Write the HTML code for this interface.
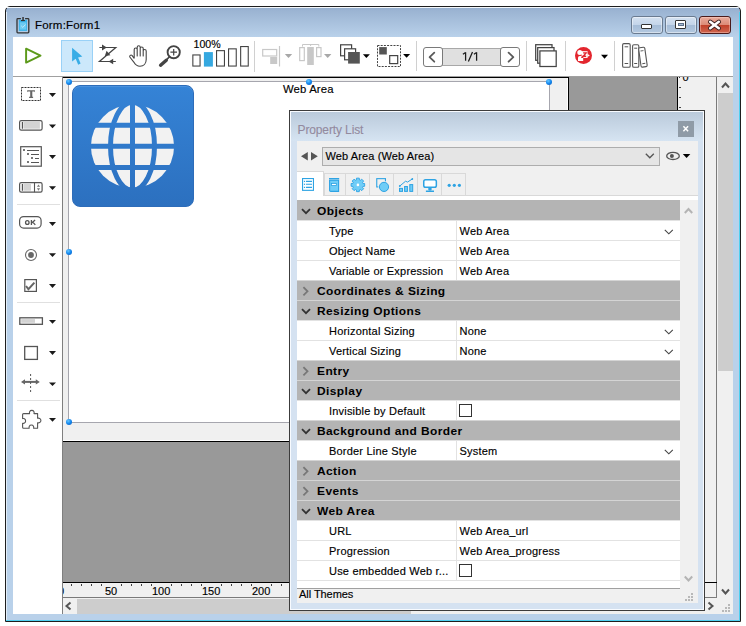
<!DOCTYPE html>
<html><head><meta charset="utf-8">
<style>
*{margin:0;padding:0;box-sizing:border-box}
html,body{width:746px;height:626px;overflow:hidden;background:#fff;font-family:"Liberation Sans",sans-serif;color:#000}
.a{position:absolute}
.t{position:absolute;white-space:nowrap;line-height:1;-webkit-text-stroke:0.15px currentColor}
.h{font-size:11.5px;letter-spacing:0.4px;font-weight:bold;transform:scaleX(1.04);transform-origin:0 0;-webkit-text-stroke:0}
svg{position:absolute;overflow:visible}
</style></head><body>
<!-- window frame -->
<div class="a" style="left:5px;top:6px;width:736px;height:616px;border:1px solid #1e1e1e;border-radius:5px 5px 0 0;background:linear-gradient(#98b1d0 1px,#b9d1ea 30px);"></div>
<div class="a" style="left:6px;top:7px;width:733px;height:1px;background:#f4f8fc;border-radius:5px 5px 0 0"></div>
<div class="a" style="left:739px;top:12px;width:1px;height:609px;background:#4fd0f0"></div>
<div class="a" style="left:6px;top:12px;width:1px;height:608px;background:#e3edf7"></div>
<div class="a" style="left:6px;top:620px;width:734px;height:1px;background:#4fd0f0"></div>

<!-- title -->
<svg style="left:14px;top:14px" width="18" height="22" viewBox="0 0 18 22">
 <rect x="4.9" y="5.8" width="8.1" height="11.1" fill="#3ab3e9"/>
 <rect x="5.8" y="8.3" width="6.4" height="7.3" fill="#6ccbf3"/>
 <path d="M6.9 4.6H3.8Q3 4.6 3 5.4V18Q3 18.8 3.8 18.8H14Q14.8 18.8 14.8 18V5.4Q14.8 4.6 14 4.6H11.1" fill="none" stroke="#333" stroke-width="1.3"/>
 <rect x="8.3" y="3" width="1.5" height="3.4" fill="#333"/>
 <rect x="7" y="6" width="3.9" height="1.1" fill="#333"/>
 <path d="M7.2 11.8L8.8 13.4L11.5 10.5" fill="none" stroke="#c8eefc" stroke-width="0.9"/>
</svg>
<div class="t" style="left:35px;top:20.3px;font-size:11.5px;letter-spacing:0.2px;color:#000">Form:Form1</div>

<!-- caption buttons -->
<div class="a" style="left:631px;top:16px;width:32px;height:18px;border:1px solid #6a7b90;border-radius:3px;background:linear-gradient(#d5e2f1 0,#c3d4e9 50%,#a5bcd7 50%,#b3c8e0 100%);box-shadow:inset 0 0 0 1px rgba(255,255,255,0.45)"></div>
<div class="a" style="left:641px;top:24px;width:11px;height:5px;border:1px solid #333;border-radius:1px;background:#fff"></div>
<div class="a" style="left:665px;top:16px;width:32px;height:18px;border:1px solid #6a7b90;border-radius:3px;background:linear-gradient(#d5e2f1 0,#c3d4e9 50%,#a5bcd7 50%,#b3c8e0 100%);box-shadow:inset 0 0 0 1px rgba(255,255,255,0.45)"></div>
<div class="a" style="left:675px;top:20px;width:11px;height:9px;border:1px solid #333;border-radius:1px;background:#fff"></div>
<div class="a" style="left:678px;top:22.5px;width:5.5px;height:3.5px;border:1px solid #5d708a;background:#a9bdd6"></div>
<div class="a" style="left:699px;top:16px;width:32px;height:18px;border:1px solid #4a1a1a;border-radius:3px;background:linear-gradient(#e9ab9c 0,#dc8a76 50%,#c03f28 50%,#d06650 100%);box-shadow:inset 0 0 0 1px rgba(255,220,210,0.4)"></div>
<svg style="left:708px;top:20px" width="13" height="10" viewBox="0 0 13 10">
 <path d="M2.2 1.8L10.8 8.2M10.8 1.8L2.2 8.2" stroke="#3a2020" stroke-width="4.4" stroke-linecap="round"/>
 <path d="M2.2 1.8L10.8 8.2M10.8 1.8L2.2 8.2" stroke="#fff" stroke-width="2.6" stroke-linecap="round"/>
</svg>

<!-- client area -->
<div class="a" style="left:13px;top:37px;width:720px;height:39px;background:#fff"></div>
<div class="a" style="left:13px;top:76px;width:720px;height:1px;background:#a0a0a0"></div>
<div class="a" style="left:13px;top:77px;width:49px;height:537px;background:#fff"></div>
<div class="a" style="left:62px;top:77px;width:1px;height:537px;background:#7f7f7f"></div>

<!-- canvas -->
<div class="a" style="left:63px;top:77px;width:614px;height:505px;background:#999"></div>
<!-- form frame -->
<div class="a" style="left:63px;top:77px;width:506px;height:365px;background:#f0f0f0;border-top:1px solid #000;border-right:1px solid #000;border-bottom:1px solid #000"></div>
<div class="a" style="left:63px;top:440px;width:505px;height:1px;background:#fff"></div>
<div class="a" style="left:567px;top:78px;width:1px;height:363px;background:#fff"></div>
<div class="a" style="left:68px;top:81px;width:482px;height:342px;background:#fff;border:1px solid #a6a6ae"></div>

<!-- toolbar -->
<svg style="left:22px;top:45px" width="22" height="22" viewBox="22 45 22 22">
 <path d="M26.1 48.7L40.5 55.6L26.1 62.6Z" fill="none" stroke="#5d9a1b" stroke-width="1.95" stroke-linejoin="round"/>
</svg>
<div class="a" style="left:61px;top:40px;width:32px;height:32px;background:#cce8fb;border:1px solid #99d1f7"></div>
<svg style="left:70px;top:46px" width="14" height="20" viewBox="70 46 14 20">
 <path d="M72.1 47.8L82.3 56.6L78.1 57.4L80.6 63.4L78.2 64.7L75.7 58.8L72.1 61.6Z" fill="#38ade6"/>
</svg>
<svg style="left:95px;top:38px" width="24" height="30" viewBox="0 0 24 30">
 <path d="M4.4 9.5H20.8L4.4 23.5H20.8" fill="none" stroke="#444" stroke-width="1.2" stroke-linejoin="miter"/>
 <path d="M11.8 9.5L7 6.6V12.4Z" fill="#444"/>
 <path d="M9.8 18.1L15.4 17.2L11.6 12.8Z" fill="#444"/>
 <path d="M13.6 23.5L18.2 20.7V26.3Z" fill="#444"/>
</svg>
<svg style="left:129px;top:45px" width="19" height="22" viewBox="0 0 19 22">
 <path d="M5.2 13.5V4.5a1.5 1.5 0 0 1 3 0V11V2.2a1.5 1.5 0 0 1 3 0V11V3.5a1.5 1.5 0 0 1 3 0V11V6a1.5 1.5 0 0 1 3 0V14.5c0 4-2.5 6.8-6.2 6.8c-3 0-4.8-1.6-6.2-4.2L0.8 12a1.4 1.4 0 0 1 2.2-1.6L5.2 13.5" fill="#fff" stroke="#444" stroke-width="1.1" stroke-linejoin="round"/>
</svg>
<svg style="left:158px;top:44px" width="24" height="24" viewBox="0 0 24 24">
 <circle cx="15.7" cy="8.2" r="6.1" fill="#fff" stroke="#444" stroke-width="1.9"/>
 <path d="M15.7 4.9v6.6M12.4 8.2h6.6" stroke="#444" stroke-width="1.2"/>
 <path d="M11.6 12.6L8.5 15.8" stroke="#444" stroke-width="1.6"/>
 <path d="M8.3 16.2L2.6 21.2" stroke="#444" stroke-width="3.4" stroke-linecap="round"/>
</svg>
<div class="t" style="left:193.5px;top:38.8px;font-size:10.6px;color:#000">100%</div>
<svg style="left:190px;top:44px" width="62" height="25" viewBox="190 44 62 25">
 <rect x="192.85" y="54.95" width="7.2" height="11.1" fill="#fff" stroke="#444" stroke-width="1.1"/>
 <rect x="203.9" y="52.1" width="9" height="14.5" fill="#35a8e0"/>
 <rect x="216.55" y="50.65" width="7.9" height="15.4" fill="#fff" stroke="#444" stroke-width="1.1"/>
 <rect x="228.55" y="48.85" width="7.7" height="17.2" fill="#fff" stroke="#444" stroke-width="1.1"/>
 <rect x="240.65" y="46.55" width="7.6" height="19.5" fill="#fff" stroke="#444" stroke-width="1.1"/>
</svg>
<div class="a" style="left:254px;top:41px;width:1px;height:31px;background:#d0d0d0"></div>
<svg style="left:260px;top:44px" width="75" height="24" viewBox="0 0 75 24">
 <rect x="2.7" y="5.5" width="14" height="6.5" fill="none" stroke="#c8c8c8" stroke-width="1.2"/>
 <rect x="10.2" y="13" width="7" height="7" fill="#c8c8c8"/>
 <path d="M19.5 2v20.5" stroke="#c8c8c8" stroke-width="1.2"/>
 <path d="M24.8 10h7.4l-3.7 4z" fill="#a8a8a8"/>
 <path d="M42.5 2.6V0.5H58.8V2.6M50.6 0.5V2" fill="none" stroke="#c8c8c8" stroke-width="1"/>
 <rect x="39.7" y="3.6" width="4.6" height="13" fill="none" stroke="#c8c8c8" stroke-width="1.2"/>
 <rect x="47.2" y="3" width="6.6" height="18" fill="#c8c8c8"/>
 <rect x="56.6" y="3.6" width="4.4" height="9" fill="none" stroke="#c8c8c8" stroke-width="1.2"/>
 <path d="M64 10h7.4l-3.7 4z" fill="#a8a8a8"/>
</svg>
<svg style="left:338px;top:43px" width="75" height="25" viewBox="0 0 75 25">
 <rect x="2.6" y="1.8" width="11" height="11" fill="#fff" stroke="#444" stroke-width="1.2"/>
 <rect x="6.6" y="5.8" width="11" height="11" fill="#fff" stroke="#444" stroke-width="1.2"/>
 <rect x="10.1" y="9" width="11.7" height="11.6" fill="#555"/>
 <path d="M24.9 11.2h7l-3.5 3.8z" fill="#000"/>
 <rect x="39.5" y="2.5" width="23" height="21" fill="none" stroke="#444" stroke-width="1" stroke-dasharray="2 1.2"/>
 <rect x="41.2" y="4.1" width="7.6" height="7.4" fill="#555"/>
 <rect x="51.7" y="12.6" width="8" height="8" fill="#fff" stroke="#444" stroke-width="1.2"/>
 <path d="M65.1 11h7l-3.5 3.8z" fill="#000"/>
</svg>
<div class="a" style="left:416px;top:41px;width:1px;height:30px;background:#d0d0d0"></div>
<div class="a" style="left:442px;top:48px;width:59px;height:18px;background:#e0e0e0;border:1px solid #a8a8a8"></div>
<div class="a" style="left:423px;top:47px;width:20px;height:20px;background:#fff;border:1px solid #7a7a7a;border-radius:3px"></div>
<div class="a" style="left:500px;top:47px;width:20px;height:20px;background:#fff;border:1px solid #7a7a7a;border-radius:3px"></div>
<svg style="left:423px;top:47px" width="97" height="20" viewBox="0 0 97 20">
 <path d="M11.3 5.7L6.6 10.2L11.3 14.7" fill="none" stroke="#5a5a5a" stroke-width="1.8" stroke-linecap="round" stroke-linejoin="round"/>
 <path d="M85.6 5.7L90.3 10.2L85.6 14.7" fill="none" stroke="#5a5a5a" stroke-width="1.8" stroke-linecap="round" stroke-linejoin="round"/>
</svg>
<svg style="left:460px;top:50px" width="20" height="13" viewBox="460 50 20 13"><path d="M465.6 52.2V60.8M465.6 52.4L462.9 54.2M476.6 52.2V60.8M476.6 52.4L473.9 54.2M468.4 61.6L472.5 52" fill="none" stroke="#1a1a1a" stroke-width="1.25"/></svg>
<div class="a" style="left:526px;top:41px;width:1px;height:30px;background:#d0d0d0"></div>
<svg style="left:534px;top:43px" width="24" height="25" viewBox="0 0 24 25">
 <rect x="1.7" y="1.7" width="16.3" height="15.6" fill="#fff" stroke="#444" stroke-width="1.25"/>
 <rect x="3.7" y="4.6" width="16.3" height="15.6" fill="#fff" stroke="#444" stroke-width="1.25"/>
 <rect x="5.9" y="7.9" width="16.3" height="15.6" fill="#fff" stroke="#444" stroke-width="1.25"/>
</svg>
<div class="a" style="left:565px;top:41px;width:1px;height:30px;background:#d0d0d0"></div>
<svg style="left:574px;top:46px" width="19" height="19" viewBox="0 0 19 19">
 <circle cx="9.5" cy="9.4" r="8.5" fill="#e3262e"/>
 <circle cx="5.8" cy="6.6" r="2.5" fill="#fff"/>
 <path d="M4 15V11.8Q4 10 5.8 10H7.4Q9.2 10 9.2 11.8V15Z" fill="#fff"/>
 <rect x="7.6" y="5.2" width="6" height="6.7" fill="#fff"/>
 <path d="M9.1 6.9H12.1L9.2 10.2H12.2" fill="none" stroke="#e3262e" stroke-width="1.4"/>
 <path d="M13.4 7.8L15.8 9.4L13.4 11Z" fill="#fff"/>
 <path d="M8.2 9.2L9.6 11.9H7z" fill="#e3262e"/>
</svg>
<svg style="left:601px;top:54px" width="8" height="6" viewBox="0 0 8 6"><path d="M0 0.8h7l-3.5 4z" fill="#000"/></svg>
<div class="a" style="left:614px;top:41px;width:1px;height:30px;background:#d0d0d0"></div>
<svg style="left:621px;top:42px" width="29" height="27" viewBox="0 0 29 27">
 <rect x="1.6" y="1.6" width="7.6" height="23.6" rx="1.3" fill="#fff" stroke="#555" stroke-width="1.1"/>
 <path d="M3.6 4.8h3.6M3.6 21.5h3.6" stroke="#555" stroke-width="1"/>
 <rect x="11.6" y="2.8" width="6.2" height="22.4" rx="1.3" fill="#fff" stroke="#555" stroke-width="1.1"/>
 <path d="M13.2 6.2h3M13.2 21.5h3" stroke="#555" stroke-width="1"/>
 <g transform="rotate(-8 21 25.2)"><rect x="20.2" y="5.6" width="6.2" height="19.6" rx="1.3" fill="#fff" stroke="#555" stroke-width="1.1"/>
 <path d="M21.8 9h3M21.8 21.8h3" stroke="#555" stroke-width="1"/></g>
</svg>

<!-- left palette -->
<svg style="left:0;top:0" width="62" height="440" viewBox="0 0 62 440">
 <g fill="#1a1a1a">
  <path d="M49 93h7l-3.5 3.9z"/>
  <path d="M49 124.4h7l-3.5 3.9z"/>
  <path d="M49 155.1h7l-3.5 3.9z"/>
  <path d="M49 186.3h7l-3.5 3.6z"/>
  <path d="M49 222h7l-3.5 3.9z"/>
  <path d="M49 253.2h7l-3.5 3.9z"/>
  <path d="M49 284.1h7l-3.5 3.8z"/>
  <path d="M49 320.1h7l-3.5 3.6z"/>
  <path d="M49 351.1h7l-3.5 3.8z"/>
  <path d="M49 382.5h7l-3.5 3.6z"/>
  <path d="M49 418h7l-3.5 3.8z"/>
 </g>
 <rect x="21.5" y="87.5" width="19" height="13" fill="none" stroke="#333" stroke-width="1" stroke-dasharray="2 1"/>
 <path d="M27.2 90.2H34.9V92.2L34.2 91.4H32.3V96.8H33.1V97.9H29.1V96.8H30.2V91.4H27.9L27.2 92.2Z" fill="#666"/>
 <rect x="19.6" y="120.6" width="22.5" height="9.6" rx="1.6" fill="#fff" stroke="#555" stroke-width="1.2"/>
 <rect x="23.4" y="122" width="16.5" height="6.7" fill="#d3d3d3"/>
 <path d="M22.4 122v6.7" stroke="#555" stroke-width="1.2"/>
 <rect x="20.7" y="146.7" width="20.6" height="19.5" fill="#fff" stroke="#555" stroke-width="1.2"/>
 <g fill="#777"><rect x="23" y="149" width="2" height="2"/><rect x="27" y="153" width="2" height="2"/><rect x="31" y="157" width="2" height="2"/><rect x="27" y="161" width="2" height="2"/></g>
 <path d="M27 150.5h12M31 154.5h8M35 158.5h4M31 162.5h8" stroke="#555" stroke-width="1"/>
 <rect x="19.6" y="182.6" width="22.5" height="9.6" rx="1.6" fill="#fff" stroke="#555" stroke-width="1.2"/>
 <path d="M34.5 182.6v9.6" stroke="#555" stroke-width="1.1"/>
 <rect x="23.4" y="184" width="7.6" height="6.7" fill="#d3d3d3"/>
 <path d="M22.4 184v6.7" stroke="#555" stroke-width="1.2"/>
 <path d="M36.9 186.7l1.6-2.3 1.6 2.3zM36.9 188.3l1.6 2.4 1.6-2.4z" fill="#777"/>
 <rect x="19.6" y="216.6" width="21.5" height="11.5" rx="4" fill="#fff" stroke="#555" stroke-width="1.2"/>
 <ellipse cx="27.3" cy="222.5" rx="1.75" ry="1.95" fill="none" stroke="#555" stroke-width="1.3"/>
 <path d="M31.4 220.1v4.8M35.1 220.1L31.7 223M32.8 222.1L35.3 224.9" fill="none" stroke="#555" stroke-width="1.3"/>
 <circle cx="31" cy="255" r="5.5" fill="#fff" stroke="#666" stroke-width="1.1"/>
 <circle cx="31" cy="255" r="2.9" fill="#666"/>
 <rect x="24.8" y="279.6" width="11.6" height="11.8" fill="#fff" stroke="#555" stroke-width="1.2"/>
 <path d="M26 286l2.4 3.2 6-6.6" fill="none" stroke="#666" stroke-width="2"/>
 <rect x="19.8" y="317.8" width="22.6" height="6.5" fill="#fff" stroke="#555" stroke-width="1.3"/>
 <rect x="21.2" y="319.1" width="13.8" height="3.7" fill="#d3d3d3"/>
 <rect x="24.7" y="346.5" width="12.7" height="12.9" fill="#fff" stroke="#555" stroke-width="1.3"/>
 <path d="M24 381.9h13" stroke="#666" stroke-width="2"/>
 <path d="M21 381.9l4-2.6v5.2zM39.8 381.9l-4-2.6v5.2z" fill="#666"/>
 <path d="M30.6 374v20" stroke="#555" stroke-width="1" stroke-dasharray="2 2"/>
 <path d="M23.6 413.6H29.6C29.2 412.5 29.6 410.4 31.8 410.4C34 410.4 34.4 412.5 34 413.6H37.6V418.3C38.7 417.9 40.9 418.3 40.9 420.5C40.9 422.7 38.7 423.1 37.6 422.7V428.2H33.6C34 427 33.6 425 31.4 425C29.2 425 28.8 427 29.2 428.2H23.6Q22.6 428.2 22.6 427.2V423.2C23.6 423.6 25.6 423.2 25.6 420.9C25.6 418.6 23.6 418.2 22.6 418.6V414.6Q22.6 413.6 23.6 413.6Z" fill="#fff" stroke="#555" stroke-width="1.1" stroke-linejoin="round"/>
</svg>
<div class="a" style="left:17px;top:204px;width:43px;height:1px;background:#e0e0e0"></div>
<div class="a" style="left:17px;top:302px;width:43px;height:1px;background:#e0e0e0"></div>
<div class="a" style="left:17px;top:400px;width:43px;height:1px;background:#e0e0e0"></div>

<!-- form content -->
<div class="a" style="left:72px;top:85px;width:122px;height:122px;border-radius:8px;background:linear-gradient(#3583d6,#2c70bf);border:1px solid #2d6cb9;box-shadow:inset 0 1px 0 #4b92de"></div>
<svg style="left:72px;top:85px" width="122" height="122" viewBox="0 0 122 122">
 <defs><clipPath id="gc"><circle cx="60.5" cy="61.3" r="43"/></clipPath><linearGradient id="bg" gradientUnits="userSpaceOnUse" x1="0" y1="0" x2="0" y2="122"><stop offset="0" stop-color="#3583d6"/><stop offset="1" stop-color="#2c70bf"/></linearGradient></defs>
 <circle cx="60.5" cy="61.3" r="41.6" fill="#f2f2f2"/>
 <g clip-path="url(#gc)">
  <g stroke="url(#bg)" stroke-width="5" fill="none">
   <path d="M0 40.2H122M0 61.3H122M0 82.4H122M60.5 0V122"/>
   <ellipse cx="60.5" cy="61.3" rx="22" ry="44"/>
  </g>
 </g>
</svg>
<div class="t" style="left:283px;top:84.2px;font-size:11.3px;letter-spacing:0.15px;color:#000">Web Area</div>
<div class="a" style="left:66px;top:79px;width:6px;height:6px;border-radius:50%;background:radial-gradient(circle at 38% 32%,#66c8ff,#1286ee 50%,#0a5ab8 100%)"></div>
<div class="a" style="left:306px;top:79px;width:6px;height:6px;border-radius:50%;background:radial-gradient(circle at 38% 32%,#66c8ff,#1286ee 50%,#0a5ab8 100%)"></div>
<div class="a" style="left:546px;top:79px;width:6px;height:6px;border-radius:50%;background:radial-gradient(circle at 38% 32%,#66c8ff,#1286ee 50%,#0a5ab8 100%)"></div>
<div class="a" style="left:66px;top:249px;width:6px;height:6px;border-radius:50%;background:radial-gradient(circle at 38% 32%,#66c8ff,#1286ee 50%,#0a5ab8 100%)"></div>
<div class="a" style="left:66px;top:419px;width:6px;height:6px;border-radius:50%;background:radial-gradient(circle at 38% 32%,#66c8ff,#1286ee 50%,#0a5ab8 100%)"></div>

<!-- vertical ruler -->
<div class="a" style="left:677px;top:77px;width:1px;height:505px;background:#000"></div>
<div class="a" style="left:678px;top:77px;width:38px;height:505px;background:#f0f0f0"></div>
<div class="a" style="left:716px;top:77px;width:1px;height:521px;background:#7a7a7a"></div>
<div class="a" style="left:679px;top:87px;width:2px;height:1px;background:#444"></div>
<div class="a" style="left:679px;top:97px;width:2px;height:1px;background:#444"></div>
<div class="a" style="left:679px;top:107px;width:2px;height:1px;background:#444"></div>
<div class="a" style="left:679px;top:77px;width:1px;height:1px;background:#333"></div>
<div class="a" style="left:678px;top:77px;width:38px;height:5px;overflow:hidden"><div class="t" style="left:4.5px;top:-5.3px;font-size:11px">0</div></div>
<!-- horizontal ruler -->
<div class="a" style="left:63px;top:582px;width:654px;height:1px;background:#000"></div>
<div class="a" style="left:63px;top:583px;width:653px;height:14px;background:#f0f0f0;overflow:hidden">
 <div class="t" style="left:-5px;top:3px;font-size:11px">0</div>
 <div class="t" style="left:42px;top:3px;font-size:11px">50</div>
 <div class="t" style="left:89px;top:3px;font-size:11px">100</div>
 <div class="t" style="left:139px;top:3px;font-size:11px">150</div>
 <div class="t" style="left:189px;top:3px;font-size:11px">200</div>
</div>
<div class="a" style="left:63px;top:597px;width:654px;height:1px;background:#7a7a7a"></div>
<svg style="left:63px;top:583px" width="230" height="4" viewBox="0 0 230 4">
 <path d="M8.5 1v2M18.5 1v2M28.5 1v2M38.5 1v2M58.5 1v2M68.5 1v2M78.5 1v2M88.5 1v2M108.5 1v2M118.5 1v2M128.5 1v2M138.5 1v2M158.5 1v2M168.5 1v2M178.5 1v2M188.5 1v2M208.5 1v2M218.5 1v2" stroke="#444" stroke-width="1"/>
</svg>
<!-- corner box -->
<div class="a" style="left:704px;top:583px;width:13px;height:15px;border-right:1px solid #7a7a7a;border-bottom:1px solid #7a7a7a;border-radius:0 0 2px 0;background:#f0f0f0"></div>
<!-- h scrollbar -->
<div class="a" style="left:63px;top:598px;width:654px;height:16px;background:#f0f0f0"></div>
<div class="a" style="left:77px;top:599px;width:334px;height:15px;background:#cdcdcd"></div>
<svg style="left:63px;top:598px" width="654" height="16" viewBox="0 0 654 16">
 <path d="M7.5 4.5L3.5 8L7.5 11.5" fill="none" stroke="#555" stroke-width="2"/>
 <path d="M645.5 4.5L649.5 8L645.5 11.5" fill="none" stroke="#555" stroke-width="2"/>
</svg>
<!-- v scrollbar -->
<div class="a" style="left:717px;top:77px;width:16px;height:537px;background:#f0f0f0"></div>
<div class="a" style="left:718px;top:93px;width:15px;height:278px;background:#cdcdcd"></div>
<svg style="left:717px;top:77px" width="16" height="537" viewBox="0 0 16 537">
 <path d="M5 10.5L8.5 6.5L12 10.5" fill="none" stroke="#555" stroke-width="2"/>
 <path d="M5 512.5L8.5 516.5L12 512.5" fill="none" stroke="#555" stroke-width="2"/>
 <g fill="#b8b8b8"><rect x="11" y="527" width="2" height="2"/><rect x="8" y="530" width="2" height="2"/><rect x="11" y="530" width="2" height="2"/><rect x="5" y="533" width="2" height="2"/><rect x="8" y="533" width="2" height="2"/><rect x="11" y="533" width="2" height="2"/></g>
</svg>

<!-- property window -->
<div class="a" style="left:289px;top:110px;width:416px;height:501px;border:1px solid #3c3c3c;background:#d5e2f1"></div>
<div class="a" style="left:290px;top:111px;width:414px;height:499px;border:1px solid #f8fbff;border-right-color:#f8fbff"></div>
<div class="a" style="left:291px;top:112px;width:412px;height:29px;background:linear-gradient(#bacadb,#d6e4f2)"></div>
<div class="t" style="left:297.5px;top:123.5px;font-size:12px;letter-spacing:-0.12px;color:#938a9e;-webkit-text-stroke:0.1px #938a9e">Property List</div>
<div class="a" style="left:678px;top:121px;width:16px;height:16px;background:#8f9ba7"></div>
<svg style="left:678px;top:121px" width="16" height="16" viewBox="0 0 16 16"><path d="M5.4 5.3L10.1 10.3M10.1 5.3L5.4 10.3" stroke="#fff" stroke-width="1.5"/></svg>
<div class="a" style="left:297px;top:141px;width:401px;height:462px;background:#f0f0f0"></div>
<svg style="left:300px;top:151px" width="20" height="11" viewBox="0 0 20 11"><path d="M1 5.3L7.8 1V9.6z M11 1V9.6L17.8 5.3z" fill="#555"/></svg>
<div class="a" style="left:322px;top:147px;width:338px;height:19px;background:#e5e5e5;border:1px solid #adadad"></div>
<div class="t" style="left:325.5px;top:150.9px;font-size:11px;letter-spacing:0.12px">Web Area (Web Area)</div>
<svg style="left:645px;top:153px" width="10" height="6" viewBox="0 0 10 6"><path d="M0.8 0.8L4.8 4.8L8.8 0.8" fill="none" stroke="#555" stroke-width="1.3"/></svg>
<svg style="left:665px;top:150px" width="27" height="12" viewBox="0 0 27 12">
 <ellipse cx="8" cy="5.9" rx="6.3" ry="3.6" fill="none" stroke="#555" stroke-width="1.3"/>
 <circle cx="6.9" cy="6.1" r="2" fill="#555"/>
 <path d="M17.8 4h7.5l-3.75 4z" fill="#000"/>
</svg>
<!-- tabs -->
<div class="a" style="left:297px;top:195px;width:401px;height:5px;background:#fff;border-top:1px solid #d9d9d9"></div>
<div class="a" style="left:324px;top:173px;width:142px;height:23px;background:#f0f0f0;border:1px solid #d9d9d9"></div>
<div class="a" style="left:345px;top:173px;width:1px;height:22px;background:#d9d9d9"></div>
<div class="a" style="left:369px;top:173px;width:1px;height:22px;background:#d9d9d9"></div>
<div class="a" style="left:393px;top:173px;width:1px;height:22px;background:#d9d9d9"></div>
<div class="a" style="left:417px;top:173px;width:1px;height:22px;background:#d9d9d9"></div>
<div class="a" style="left:441px;top:173px;width:1px;height:22px;background:#d9d9d9"></div>
<div class="a" style="left:297px;top:171px;width:27px;height:25px;background:#fff;border-top:1px solid #d9d9d9;border-right:1px solid #d9d9d9"></div>
<svg style="left:297px;top:171px" width="170" height="25" viewBox="297 171 170 25">
 <rect x="302.55" y="178.55" width="10.9" height="11.8" fill="#fff" stroke="#2ea3e3" stroke-width="1.1"/>
 <g fill="#2ea3e3"><rect x="303.9" y="180.8" width="1.2" height="1.2"/><rect x="303.9" y="183.7" width="1.2" height="1.2"/><rect x="303.9" y="186.8" width="1.2" height="1.2"/></g>
 <path d="M306 181.4H312M306 184.3H312M306 187.4H312" stroke="#2ea3e3" stroke-width="1.1"/>
 <path d="M329.6 180.1H338.6V191.4H330.8Q329.6 191.4 329.6 190.2Z" fill="#6fcdf7" stroke="#2ea3e3" stroke-width="1.1"/>
 <path d="M329 178.6H339.2" stroke="#2ea3e3" stroke-width="1.2"/>
 <rect x="331.4" y="183.5" width="4.9" height="2" fill="#fff" stroke="#2ea3e3" stroke-width="0.8"/>
 <path d="M362.87 183.36 L364.66 183.53 L364.66 186.27 L362.87 186.44 L362.50 187.33 L363.65 188.71 L361.71 190.65 L360.33 189.50 L359.44 189.87 L359.27 191.66 L356.53 191.66 L356.36 189.87 L355.47 189.50 L354.09 190.65 L352.15 188.71 L353.30 187.33 L352.93 186.44 L351.14 186.27 L351.14 183.53 L352.93 183.36 L353.30 182.47 L352.15 181.09 L354.09 179.15 L355.47 180.30 L356.36 179.93 L356.53 178.14 L359.27 178.14 L359.44 179.93 L360.33 180.30 L361.71 179.15 L363.65 181.09 L362.50 182.47Z" fill="#6fcdf7" stroke="#2ea3e3" stroke-width="0.9" stroke-linejoin="round"/>
 <circle cx="357.9" cy="184.9" r="1.3" fill="#fff"/>
 <rect x="376.75" y="178.65" width="8.7" height="8.3" fill="none" stroke="#2ea3e3" stroke-width="1.1"/>
 <circle cx="384" cy="186.9" r="5.8" fill="#f0f0f0"/>
 <circle cx="384" cy="186.9" r="4.6" fill="#6fcdf7" stroke="#2ea3e3" stroke-width="1"/>
 <g fill="#6fcdf7" stroke="#2ea3e3" stroke-width="1"><rect x="399.5" y="188.4" width="3" height="3"/><rect x="404.6" y="186.5" width="2.8" height="4.9"/><rect x="409.8" y="184.6" width="2.9" height="6.8"/></g>
 <path d="M399.8 186L405.6 181.2L407.5 182.1L412.3 179" fill="none" stroke="#2ea3e3" stroke-width="1"/>
 <circle cx="399.8" cy="186" r="0.9" fill="#2ea3e3"/><circle cx="412.3" cy="179" r="0.9" fill="#2ea3e3"/>
 <rect x="423.75" y="179.75" width="12.6" height="7.6" rx="1.8" fill="#fff" stroke="#2ea3e3" stroke-width="1.5"/>
 <path d="M430 188v2.2M425.9 191.3H434" stroke="#2ea3e3" stroke-width="1.6"/>
 <rect x="428.3" y="188" width="3.3" height="2.2" fill="#2ea3e3"/>
 <g fill="#2ea3e3"><circle cx="449.2" cy="185.3" r="1.6"/><circle cx="454.3" cy="185.3" r="1.6"/><circle cx="459.4" cy="185.3" r="1.6"/></g>
</svg>
<div class="a" style="left:297px;top:200px;width:383px;height:20px;background:#b4b4b4"></div>
<svg style="left:301px;top:207.6px" width="10" height="7" viewBox="0 0 10 7"><path d="M1 1.2L5 5.2L9 1.2" fill="none" stroke="#333" stroke-width="1.8"/></svg>
<div class="t h" style="left:317px;top:206.2px">Objects</div>
<div class="a" style="left:297px;top:220px;width:383px;height:20px;background:#fff;border-top:1px solid #e2e2e2"></div>
<div class="a" style="left:456px;top:220px;width:1px;height:20px;background:#e2e2e2"></div>
<div class="t" style="left:329px;top:225.5px;font-size:11px;letter-spacing:0.2px">Type</div>
<div class="t" style="left:459.5px;top:225.5px;font-size:11px;letter-spacing:0.2px">Web Area</div>
<svg style="left:664px;top:229px" width="10" height="6" viewBox="0 0 10 6"><path d="M0.8 0.8L4.8 4.8L8.8 0.8" fill="none" stroke="#444" stroke-width="1.1"/></svg>
<div class="a" style="left:297px;top:240px;width:383px;height:20px;background:#fff;border-top:1px solid #e2e2e2"></div>
<div class="a" style="left:456px;top:240px;width:1px;height:20px;background:#e2e2e2"></div>
<div class="t" style="left:329px;top:245.5px;font-size:11px;letter-spacing:0.2px">Object Name</div>
<div class="t" style="left:459.5px;top:245.5px;font-size:11px;letter-spacing:0.2px">Web Area</div>
<div class="a" style="left:297px;top:260px;width:383px;height:20px;background:#fff;border-top:1px solid #e2e2e2"></div>
<div class="a" style="left:456px;top:260px;width:1px;height:20px;background:#e2e2e2"></div>
<div class="t" style="left:329px;top:265.5px;font-size:11px;letter-spacing:0.2px">Variable or Expression</div>
<div class="t" style="left:459.5px;top:265.5px;font-size:11px;letter-spacing:0.2px">Web Area</div>
<div class="a" style="left:297px;top:280px;width:383px;height:20px;background:#b4b4b4"></div>
<div class="a" style="left:297px;top:280px;width:383px;height:1px;background:#d4d4d4"></div>
<svg style="left:302px;top:286px" width="8" height="11" viewBox="0 0 8 11"><path d="M1.4 1.2L5.5 5.3L1.4 9.4" fill="none" stroke="#777" stroke-width="1.8"/></svg>
<div class="t h" style="left:317px;top:286.2px">Coordinates &amp; Sizing</div>
<div class="a" style="left:297px;top:300px;width:383px;height:20px;background:#b4b4b4"></div>
<div class="a" style="left:297px;top:300px;width:383px;height:1px;background:#d4d4d4"></div>
<svg style="left:301px;top:307.6px" width="10" height="7" viewBox="0 0 10 7"><path d="M1 1.2L5 5.2L9 1.2" fill="none" stroke="#333" stroke-width="1.8"/></svg>
<div class="t h" style="left:317px;top:306.2px">Resizing Options</div>
<div class="a" style="left:297px;top:320px;width:383px;height:20px;background:#fff;border-top:1px solid #e2e2e2"></div>
<div class="a" style="left:456px;top:320px;width:1px;height:20px;background:#e2e2e2"></div>
<div class="t" style="left:329px;top:325.5px;font-size:11px;letter-spacing:0.2px">Horizontal Sizing</div>
<div class="t" style="left:459.5px;top:325.5px;font-size:11px;letter-spacing:0.2px">None</div>
<svg style="left:664px;top:329px" width="10" height="6" viewBox="0 0 10 6"><path d="M0.8 0.8L4.8 4.8L8.8 0.8" fill="none" stroke="#444" stroke-width="1.1"/></svg>
<div class="a" style="left:297px;top:340px;width:383px;height:20px;background:#fff;border-top:1px solid #e2e2e2"></div>
<div class="a" style="left:456px;top:340px;width:1px;height:20px;background:#e2e2e2"></div>
<div class="t" style="left:329px;top:345.5px;font-size:11px;letter-spacing:0.2px">Vertical Sizing</div>
<div class="t" style="left:459.5px;top:345.5px;font-size:11px;letter-spacing:0.2px">None</div>
<svg style="left:664px;top:349px" width="10" height="6" viewBox="0 0 10 6"><path d="M0.8 0.8L4.8 4.8L8.8 0.8" fill="none" stroke="#444" stroke-width="1.1"/></svg>
<div class="a" style="left:297px;top:360px;width:383px;height:20px;background:#b4b4b4"></div>
<div class="a" style="left:297px;top:360px;width:383px;height:1px;background:#d4d4d4"></div>
<svg style="left:302px;top:366px" width="8" height="11" viewBox="0 0 8 11"><path d="M1.4 1.2L5.5 5.3L1.4 9.4" fill="none" stroke="#777" stroke-width="1.8"/></svg>
<div class="t h" style="left:317px;top:366.2px">Entry</div>
<div class="a" style="left:297px;top:380px;width:383px;height:20px;background:#b4b4b4"></div>
<div class="a" style="left:297px;top:380px;width:383px;height:1px;background:#d4d4d4"></div>
<svg style="left:301px;top:387.6px" width="10" height="7" viewBox="0 0 10 7"><path d="M1 1.2L5 5.2L9 1.2" fill="none" stroke="#333" stroke-width="1.8"/></svg>
<div class="t h" style="left:317px;top:386.2px">Display</div>
<div class="a" style="left:297px;top:400px;width:383px;height:20px;background:#fff;border-top:1px solid #e2e2e2"></div>
<div class="a" style="left:456px;top:400px;width:1px;height:20px;background:#e2e2e2"></div>
<div class="t" style="left:329px;top:405.5px;font-size:11px;letter-spacing:0.2px">Invisible by Default</div>
<div class="a" style="left:459px;top:404px;width:13px;height:13px;border:1px solid #333;background:#fff"></div>
<div class="a" style="left:297px;top:420px;width:383px;height:20px;background:#b4b4b4"></div>
<div class="a" style="left:297px;top:420px;width:383px;height:1px;background:#d4d4d4"></div>
<svg style="left:301px;top:427.6px" width="10" height="7" viewBox="0 0 10 7"><path d="M1 1.2L5 5.2L9 1.2" fill="none" stroke="#333" stroke-width="1.8"/></svg>
<div class="t h" style="left:317px;top:426.2px">Background and Border</div>
<div class="a" style="left:297px;top:440px;width:383px;height:20px;background:#fff;border-top:1px solid #e2e2e2"></div>
<div class="a" style="left:456px;top:440px;width:1px;height:20px;background:#e2e2e2"></div>
<div class="t" style="left:329px;top:445.5px;font-size:11px;letter-spacing:0.2px">Border Line Style</div>
<div class="t" style="left:459.5px;top:445.5px;font-size:11px;letter-spacing:0.2px">System</div>
<svg style="left:664px;top:449px" width="10" height="6" viewBox="0 0 10 6"><path d="M0.8 0.8L4.8 4.8L8.8 0.8" fill="none" stroke="#444" stroke-width="1.1"/></svg>
<div class="a" style="left:297px;top:460px;width:383px;height:20px;background:#b4b4b4"></div>
<div class="a" style="left:297px;top:460px;width:383px;height:1px;background:#d4d4d4"></div>
<svg style="left:302px;top:466px" width="8" height="11" viewBox="0 0 8 11"><path d="M1.4 1.2L5.5 5.3L1.4 9.4" fill="none" stroke="#777" stroke-width="1.8"/></svg>
<div class="t h" style="left:317px;top:466.2px">Action</div>
<div class="a" style="left:297px;top:480px;width:383px;height:20px;background:#b4b4b4"></div>
<div class="a" style="left:297px;top:480px;width:383px;height:1px;background:#d4d4d4"></div>
<svg style="left:302px;top:486px" width="8" height="11" viewBox="0 0 8 11"><path d="M1.4 1.2L5.5 5.3L1.4 9.4" fill="none" stroke="#777" stroke-width="1.8"/></svg>
<div class="t h" style="left:317px;top:486.2px">Events</div>
<div class="a" style="left:297px;top:500px;width:383px;height:20px;background:#b4b4b4"></div>
<div class="a" style="left:297px;top:500px;width:383px;height:1px;background:#d4d4d4"></div>
<svg style="left:301px;top:507.6px" width="10" height="7" viewBox="0 0 10 7"><path d="M1 1.2L5 5.2L9 1.2" fill="none" stroke="#333" stroke-width="1.8"/></svg>
<div class="t h" style="left:317px;top:506.2px">Web Area</div>
<div class="a" style="left:297px;top:520px;width:383px;height:20px;background:#fff;border-top:1px solid #e2e2e2"></div>
<div class="a" style="left:456px;top:520px;width:1px;height:20px;background:#e2e2e2"></div>
<div class="t" style="left:329px;top:525.5px;font-size:11px;letter-spacing:0.2px">URL</div>
<div class="t" style="left:459.5px;top:525.5px;font-size:11px;letter-spacing:0.2px">Web Area_url</div>
<div class="a" style="left:297px;top:540px;width:383px;height:20px;background:#fff;border-top:1px solid #e2e2e2"></div>
<div class="a" style="left:456px;top:540px;width:1px;height:20px;background:#e2e2e2"></div>
<div class="t" style="left:329px;top:545.5px;font-size:11px;letter-spacing:0.2px">Progression</div>
<div class="t" style="left:459.5px;top:545.5px;font-size:11px;letter-spacing:0.2px">Web Area_progress</div>
<div class="a" style="left:297px;top:560px;width:383px;height:20px;background:#fff;border-top:1px solid #e2e2e2"></div>
<div class="a" style="left:456px;top:560px;width:1px;height:20px;background:#e2e2e2"></div>
<div class="t" style="left:329px;top:565.5px;font-size:11px;letter-spacing:0.2px">Use embedded Web r...</div>
<div class="a" style="left:459px;top:564px;width:13px;height:13px;border:1px solid #333;background:#fff"></div>
<div class="a" style="left:297px;top:580px;width:383px;height:8px;background:#fff;border-top:1px solid #e2e2e2"></div>
<div class="a" style="left:297px;top:588px;width:383px;height:1px;background:#a0a0a0"></div>
<div class="t" style="left:299px;top:588.5px;font-size:11px;letter-spacing:-0.05px">All Themes</div>
<svg style="left:680px;top:200px" width="17" height="388" viewBox="0 0 17 388">
 <path d="M4.8 13L8.5 9L12.2 13" fill="none" stroke="#b4b4b4" stroke-width="2"/>
 <path d="M4.8 376.5L8.5 380.5L12.2 376.5" fill="none" stroke="#b4b4b4" stroke-width="2"/>
</svg>
<svg style="left:680px;top:589px" width="17" height="14" viewBox="0 0 17 14">
 <g fill="#b8b8b8"><rect x="11" y="4" width="2" height="2"/><rect x="8" y="7" width="2" height="2"/><rect x="11" y="7" width="2" height="2"/><rect x="5" y="10" width="2" height="2"/><rect x="8" y="10" width="2" height="2"/><rect x="11" y="10" width="2" height="2"/></g>
</svg>
</body></html>
